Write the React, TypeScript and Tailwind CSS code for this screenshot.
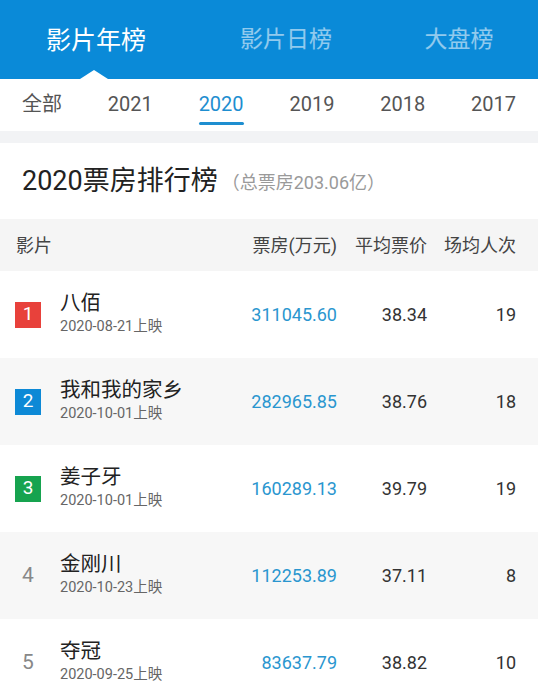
import React from "react";

const font = { fontFamily: "Roboto, 'Noto Sans CJK SC', sans-serif" };

const rows = [
  { rank: 1, name: "八佰", date: "2020-08-21上映", box: "311045.60", avg: "38.34", ppl: "19", badge: "bg-[#e8413b]" },
  { rank: 2, name: "我和我的家乡", date: "2020-10-01上映", box: "282965.85", avg: "38.76", ppl: "18", badge: "bg-[#0d89d6]" },
  { rank: 3, name: "姜子牙", date: "2020-10-01上映", box: "160289.13", avg: "39.79", ppl: "19", badge: "bg-[#16a34f]" },
  { rank: 4, name: "金刚川", date: "2020-10-23上映", box: "112253.89", avg: "37.11", ppl: "8", badge: "" },
  { rank: 5, name: "夺冠", date: "2020-09-25上映", box: "83637.79", avg: "38.82", ppl: "10", badge: "" },
];

const years = ["全部", "2021", "2020", "2019", "2018", "2017"];

export default function App() {
  return (
    <div className="w-[538px] h-[700px] overflow-hidden bg-white" style={font}>
      {/* Top tabs */}
      <div className="relative h-[79px] bg-[#0a8ad8] flex items-center">
        <div className="w-[192px] flex justify-center text-[25px] text-white pt-[2px]">影片年榜</div>
        <div className="w-[188px] flex justify-center text-[23px] text-white/55 pt-[2px]">影片日榜</div>
        <div className="flex-1 flex justify-center text-[23px] text-white/55 pt-[2px]">大盘榜</div>
        <div className="absolute left-[80px] bottom-0 w-0 h-0 border-l-[14px] border-r-[14px] border-b-[9px] border-l-transparent border-r-transparent border-b-white" />
      </div>
      {/* Years */}
      <div className="h-[52px] flex items-stretch justify-between px-[22px] bg-white">
        {years.map((y) => (
          <div key={y} className="relative flex items-center pb-[3px]">
            <span className={`text-[20px] ${y === "2020" ? "text-[#1e8ed0]" : "text-[#555]"}`}>{y}</span>
            {y === "2020" && <div className="absolute left-0 right-0 bottom-[6px] h-[3px] rounded-full bg-[#1e8ed0]" />}
          </div>
        ))}
      </div>
      <div className="h-[12px] bg-[#f2f3f5]" />
      {/* Title */}
      <div className="h-[76px] flex items-center px-[22px]">
        <span className="text-[27px] text-[#222]">2020票房排行榜</span>
        <span className="ml-[4px] text-[18px] text-[#9a9a9a] mt-[2px]">（总票房203.06亿）</span>
      </div>
      {/* Table header */}
      <div className="h-[52px] bg-[#f5f5f5] flex items-center pl-[16px] pr-[22px] text-[18px] text-[#444]">
        <div className="flex-1">影片</div>
        <div className="w-[120px] text-right">票房(万元)</div>
        <div className="w-[90px] text-right">平均票价</div>
        <div className="w-[89px] text-right">场均人次</div>
      </div>
      {/* Rows */}
      {rows.map((r, i) => (
        <div key={r.rank} className={`h-[87px] flex items-center pl-[15px] pr-[22px] ${i % 2 === 1 ? "bg-[#f7f7f7]" : "bg-white"}`}>
          <div className="w-[45px] flex items-center">
            {r.badge ? (
              <div className={`w-[26px] h-[26px] ${r.badge} text-white text-[19px] flex items-center justify-center`}>{r.rank}</div>
            ) : (
              <div className="w-[26px] flex justify-center text-[21px] text-[#888]">{r.rank}</div>
            )}
          </div>
          <div className="flex-1 flex flex-col">
            <div className="text-[20.5px] text-[#222] leading-[26px] -mt-[2px]">{r.name}</div>
            <div className="text-[14.5px] text-[#666] leading-[20px] mt-[1px]">{r.date}</div>
          </div>
          <div className="w-[120px] text-right text-[18px] text-[#2a96cf]">{r.box}</div>
          <div className="w-[90px] text-right text-[18px] text-[#333]">{r.avg}</div>
          <div className="w-[89px] text-right text-[18px] text-[#333]">{r.ppl}</div>
        </div>
      ))}
    </div>
  );
}
